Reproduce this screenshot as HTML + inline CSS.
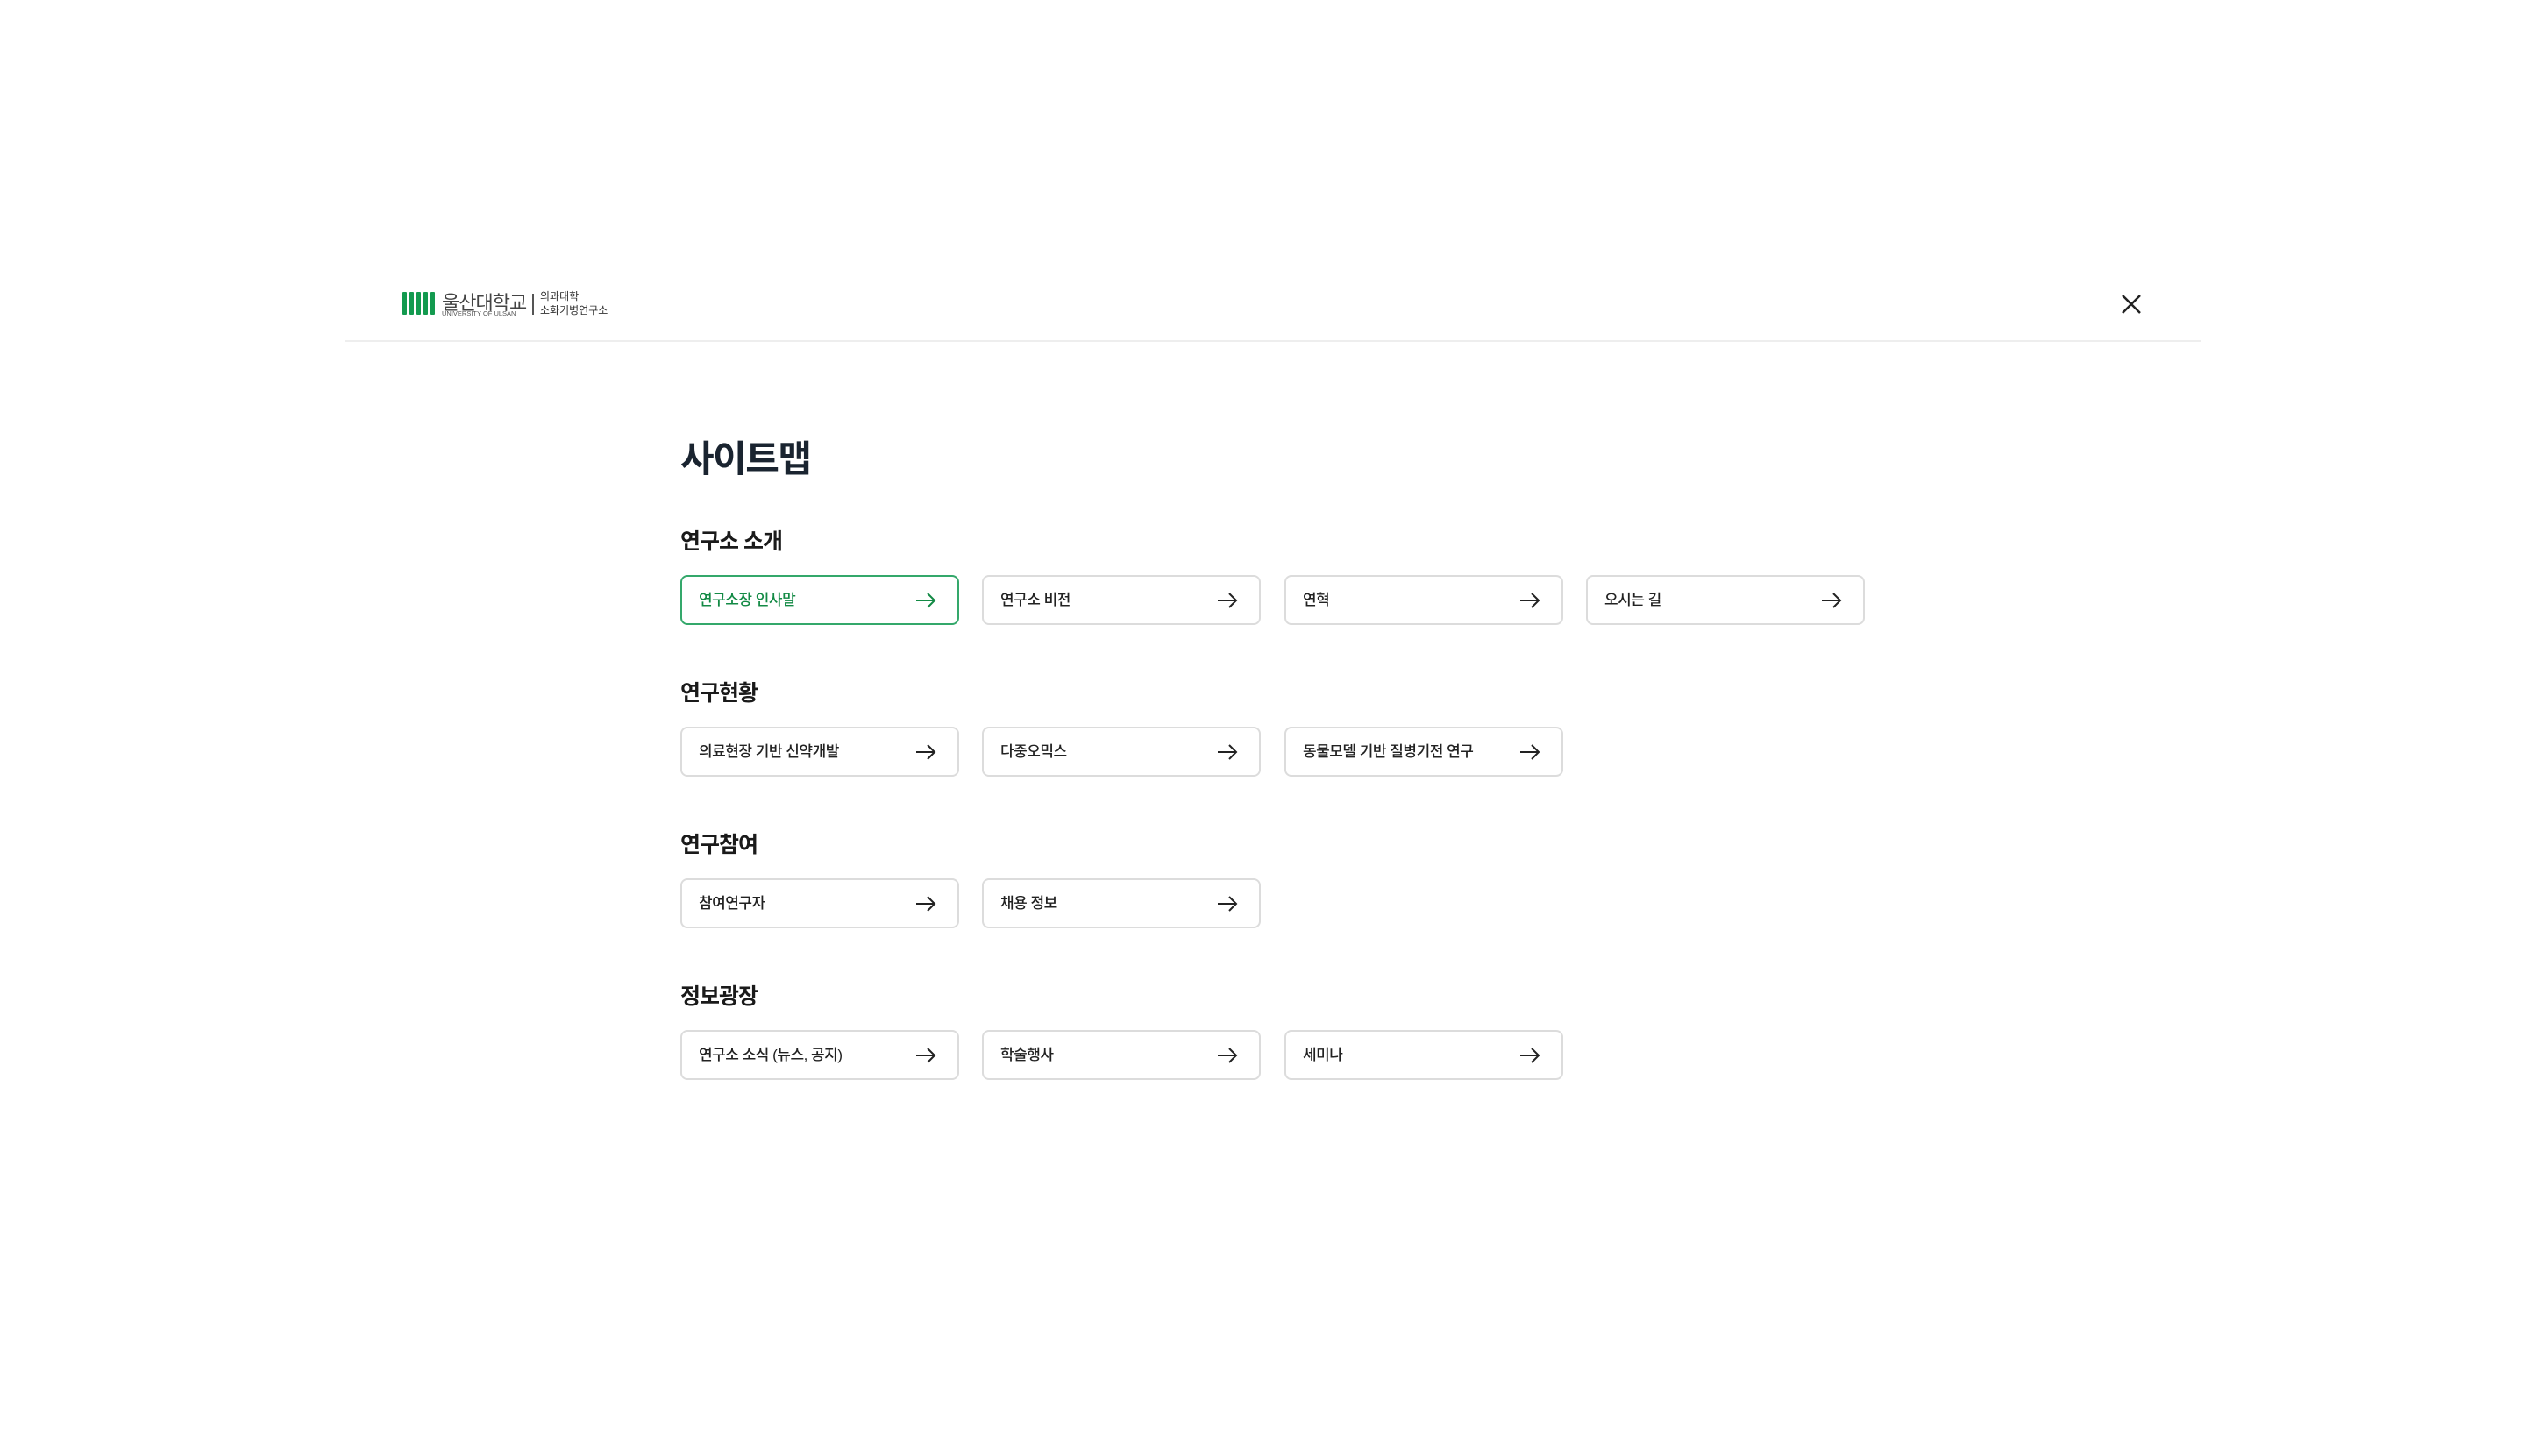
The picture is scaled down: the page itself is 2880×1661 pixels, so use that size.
<!DOCTYPE html>
<html><head><meta charset="utf-8"><style>
*{margin:0;padding:0;box-sizing:border-box}
body{width:2880px;height:1661px;background:#fff;font-family:"Liberation Sans","Noto Sans CJK KR",sans-serif;position:relative;overflow:hidden;color:#111}
.hline{position:absolute;left:393px;width:2117px;top:388px;height:2px;background:#eeeeee}
.logo{position:absolute;left:459px;top:333px}
.bar{position:absolute;top:0;width:5px;height:26px;background:#139a4f;border-radius:1px}
.ko{position:absolute;left:45px;top:-5px;font-size:22px;color:#444;white-space:nowrap;letter-spacing:-1px}
.en{position:absolute;left:45px;top:20px;font-size:7.5px;color:#555;white-space:nowrap}
.sep{position:absolute;left:148px;top:2px;width:1.5px;height:24px;background:#555}
.sub{position:absolute;left:157px;top:-3px;font-size:12px;line-height:16px;color:#333;white-space:nowrap}
.close{position:absolute;left:2419px;top:335px}
h1{position:absolute;left:776px;top:490px;font-size:42px;font-weight:700;color:#1a2430;letter-spacing:-1.5px}
h2{position:absolute;left:776px;font-size:25px;font-weight:700;color:#1a1a1a;letter-spacing:-1px}
.btn{position:absolute;width:318px;height:57px;border:2px solid #dcdcdc;border-radius:8px;font-size:17px;font-weight:500;color:#222;padding-left:19px;line-height:53px;letter-spacing:-0.5px;white-space:nowrap}
.btn svg{position:absolute;right:24px;top:17px}
.on{border-color:#34a86b;color:#138a45}
</style></head><body>
<div class="logo">
<div class="bar" style="left:0"></div><div class="bar" style="left:8px"></div><div class="bar" style="left:16px"></div><div class="bar" style="left:24px"></div><div class="bar" style="left:32px"></div>
<div class="ko">울산대학교</div><div class="en">UNIVERSITY OF ULSAN</div>
<div class="sep"></div>
<div class="sub">의과대학<br>소화기병연구소</div>
</div>
<svg class="close" width="24" height="24" viewBox="0 0 24 24"><path d="M2 2L22 22M22 2L2 22" stroke="#222" stroke-width="2.5"/></svg>
<div class="hline"></div>
<h1>사이트맵</h1>
<h2 style="top:598px">연구소 소개</h2>
<h2 style="top:771px">연구현황</h2>
<h2 style="top:944px">연구참여</h2>
<h2 style="top:1117px">정보광장</h2>
<div class="btn on" style="left:776px;top:656px">연구소장 인사말<svg width="24" height="20" viewBox="0 0 24 20"><path d="M1 10H22M14 2L22 10L14 18" fill="none" stroke="#138a45" stroke-width="2"/></svg></div>
<div class="btn" style="left:1120px;top:656px">연구소 비전<svg width="24" height="20" viewBox="0 0 24 20"><path d="M1 10H22M14 2L22 10L14 18" fill="none" stroke="#222" stroke-width="2"/></svg></div>
<div class="btn" style="left:1465px;top:656px">연혁<svg width="24" height="20" viewBox="0 0 24 20"><path d="M1 10H22M14 2L22 10L14 18" fill="none" stroke="#222" stroke-width="2"/></svg></div>
<div class="btn" style="left:1809px;top:656px">오시는 길<svg width="24" height="20" viewBox="0 0 24 20"><path d="M1 10H22M14 2L22 10L14 18" fill="none" stroke="#222" stroke-width="2"/></svg></div>
<div class="btn" style="left:776px;top:829px">의료현장 기반 신약개발<svg width="24" height="20" viewBox="0 0 24 20"><path d="M1 10H22M14 2L22 10L14 18" fill="none" stroke="#222" stroke-width="2"/></svg></div>
<div class="btn" style="left:1120px;top:829px">다중오믹스<svg width="24" height="20" viewBox="0 0 24 20"><path d="M1 10H22M14 2L22 10L14 18" fill="none" stroke="#222" stroke-width="2"/></svg></div>
<div class="btn" style="left:1465px;top:829px">동물모델 기반 질병기전 연구<svg width="24" height="20" viewBox="0 0 24 20"><path d="M1 10H22M14 2L22 10L14 18" fill="none" stroke="#222" stroke-width="2"/></svg></div>
<div class="btn" style="left:776px;top:1002px">참여연구자<svg width="24" height="20" viewBox="0 0 24 20"><path d="M1 10H22M14 2L22 10L14 18" fill="none" stroke="#222" stroke-width="2"/></svg></div>
<div class="btn" style="left:1120px;top:1002px">채용 정보<svg width="24" height="20" viewBox="0 0 24 20"><path d="M1 10H22M14 2L22 10L14 18" fill="none" stroke="#222" stroke-width="2"/></svg></div>
<div class="btn" style="left:776px;top:1175px">연구소 소식 (뉴스, 공지)<svg width="24" height="20" viewBox="0 0 24 20"><path d="M1 10H22M14 2L22 10L14 18" fill="none" stroke="#222" stroke-width="2"/></svg></div>
<div class="btn" style="left:1120px;top:1175px">학술행사<svg width="24" height="20" viewBox="0 0 24 20"><path d="M1 10H22M14 2L22 10L14 18" fill="none" stroke="#222" stroke-width="2"/></svg></div>
<div class="btn" style="left:1465px;top:1175px">세미나<svg width="24" height="20" viewBox="0 0 24 20"><path d="M1 10H22M14 2L22 10L14 18" fill="none" stroke="#222" stroke-width="2"/></svg></div>
</body></html>
